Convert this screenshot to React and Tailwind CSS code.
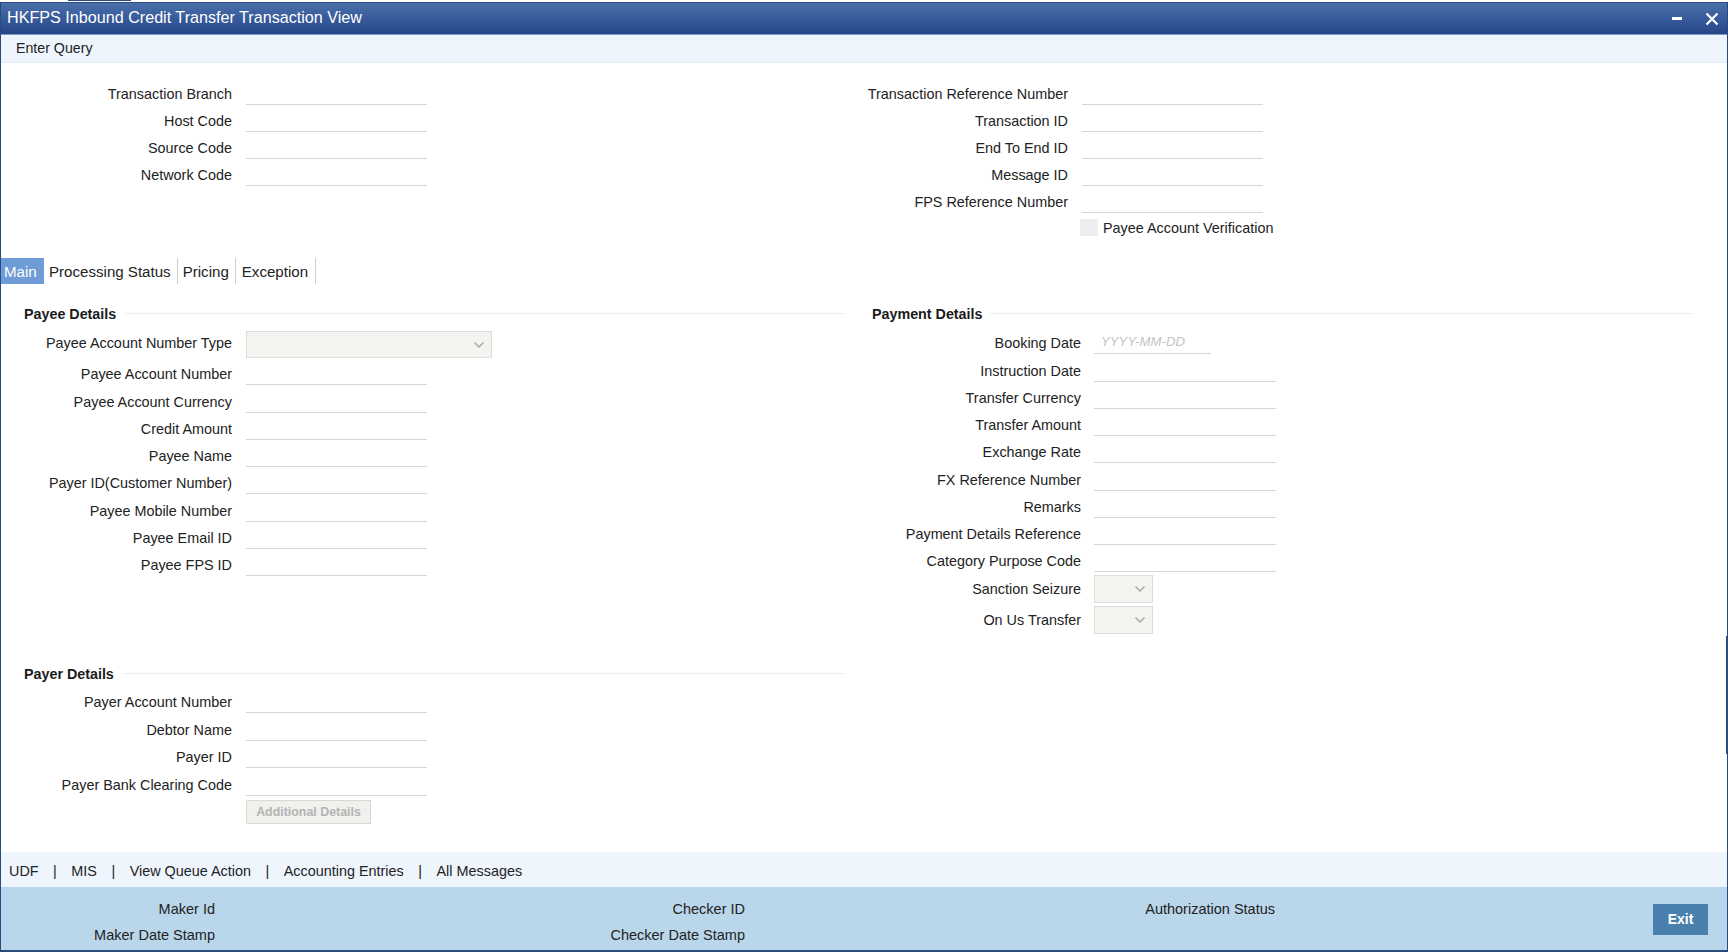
import { ChevronDown } from "lucide-react"

const headLeft = ["Transaction Branch", "Host Code", "Source Code", "Network Code"]
const headRight = ["Transaction Reference Number", "Transaction ID", "End To End ID", "Message ID", "FPS Reference Number"]
const payee = ["Payee Account Number", "Payee Account Currency", "Credit Amount", "Payee Name", "Payer ID(Customer Number)", "Payee Mobile Number", "Payee Email ID", "Payee FPS ID"]
const payment = ["Instruction Date", "Transfer Currency", "Transfer Amount", "Exchange Rate", "FX Reference Number", "Remarks", "Payment Details Reference", "Category Purpose Code"]
const payer = ["Payer Account Number", "Debtor Name", "Payer ID", "Payer Bank Clearing Code"]
const tabs = ["Processing Status", "Pricing", "Exception"]
const links = ["MIS", "View Queue Action", "Accounting Entries", "All Messages"]

function Row({ label, labelW, gap, h, inputW = "w-[181px]", placeholder }) {
  return (
    <div className={`flex items-end ${h} ${gap}`}>
      <label className={`${labelW} shrink-0 text-right leading-[17px] pb-[2px] whitespace-nowrap`}>{label}</label>
      <input
        disabled
        placeholder={placeholder}
        className={`${inputW} h-[24px] border-b border-[#d6d6d6] bg-white px-[7px] text-[13.2px] italic outline-none placeholder:text-[#c4c4c4]`}
      />
    </div>
  )
}

function SelectBox({ w, h }) {
  return (
    <div className={`${w} ${h} shrink-0 flex items-center justify-end pr-[4px] bg-[#f4f3f0] border border-[#dcdcdc]`}>
      <ChevronDown size={16} strokeWidth={2.5} className="text-[#ababab]" />
    </div>
  )
}

function SectionTitle({ title, className }) {
  return (
    <div className={`flex items-center gap-[8px] h-[20px] ${className}`}>
      <span className="font-bold text-[14.3px] leading-[20px] text-[#1a1a1a] whitespace-nowrap">{title}</span>
      <div className="flex-1 h-px bg-[#eeeeee] -mt-[2px]" />
    </div>
  )
}

export default function App() {
  return (
    <div className="w-[1728px] h-[952px] overflow-hidden bg-white text-[14.4px] text-[#222222] font-['Liberation_Sans',Arial,sans-serif]">
      <div className="h-[2px] pl-[68px]">
        <div className="w-[63px] h-px bg-[#2a4b80]" />
      </div>

      <div className="relative h-[950px] flex flex-col border-x border-t border-b-2 border-[#2a4b80]">
        <div className="absolute -right-px top-[633px] w-[2px] h-[118px] bg-[#2a4b80]" />

        {/* title bar */}
        <div className="h-[32px] shrink-0 flex items-center justify-between pl-[6px] pr-[8px] bg-gradient-to-b from-[#4a70aa] to-[#25468a] border-b border-[#7f9cc4]">
          <span className="text-white text-[16.15px] pb-[2px]">HKFPS Inbound Credit Transfer Transaction View</span>
          <div className="flex items-center gap-[23px]">
            <div className="w-[10px] h-[2.5px] bg-white" />
            <svg width="14" height="14" viewBox="0 0 14 14" className="text-white">
              <path d="M1.5 1.5 L12.5 12.5 M12.5 1.5 L1.5 12.5" stroke="currentColor" strokeWidth="2.2" />
            </svg>
          </div>
        </div>

        {/* toolbar */}
        <div className="h-[28px] shrink-0 flex items-center pl-[15px] bg-[#eef5fd] border-b border-[#e6eaee] text-[14.2px]">Enter Query</div>

        {/* header fields */}
        <div className="h-[195px] shrink-0 flex pt-[15px]">
          <div className="w-[844px] shrink-0">
            {headLeft.map((l) => (
              <Row key={l} label={l} labelW="w-[231px]" gap="gap-[14px]" h="h-[27px]" />
            ))}
          </div>
          <div>
            {headRight.map((l) => (
              <Row key={l} label={l} labelW="w-[223px]" gap="gap-[14px]" h="h-[27px]" />
            ))}
            <div className="flex items-center gap-[5px] mt-[6px] ml-[235px] h-[17px]">
              <div className="w-[18px] h-[17px] bg-[#eeeeee]" />
              <span className="pt-[2px]">Payee Account Verification</span>
            </div>
          </div>
        </div>

        {/* tabs */}
        <div className="h-[26px] shrink-0 flex text-[15.1px] leading-[28px]">
          <div className="w-[43px] pl-[3px] bg-[#6f9bd6] text-white">Main</div>
          {tabs.map((t) => (
            <div key={t} className="pl-[4px] pr-[6px] ml-[1px] border-r border-[#cfcfcf] whitespace-nowrap first:ml-0 last:pr-[7px] last:pl-[5px]">{t}</div>
          ))}
        </div>

        {/* main */}
        <div className="flex-1 flex pt-[20px]">
          <div className="w-[844px] shrink-0">
            <SectionTitle title="Payee Details" className="pl-[23px]" />
            <div className="flex items-center gap-[14px] mt-[7px] h-[27px]">
              <label className="w-[231px] text-right pb-[2px]">Payee Account Number Type</label>
              <SelectBox w="w-[246px]" h="h-[27px]" />
            </div>
            {payee.map((l) => (
              <Row key={l} label={l} labelW="w-[231px]" gap="gap-[14px]" h="h-[27.25px]" />
            ))}

            <SectionTitle title="Payer Details" className="pl-[23px] mt-[88px]" />
            <div className="mt-[1.5px]">
              {payer.map((l) => (
                <Row key={l} label={l} labelW="w-[231px]" gap="gap-[14px]" h="h-[27.5px]" />
              ))}
            </div>
            <button disabled className="block mt-[4.5px] ml-[245px] w-[125px] h-[24px] bg-[#f1f0ec] border border-[#d8d8d4] text-[12.4px] font-bold text-[#b4b4b4]">
              Additional Details
            </button>
          </div>

          <div className="flex-1 pr-[34px]">
            <SectionTitle title="Payment Details" className="pl-[27px]" />
            <div className="mt-[3px]">
              <Row label="Booking Date" labelW="w-[236px]" gap="gap-[13px]" h="h-[27.25px]" inputW="w-[117px]" placeholder="YYYY-MM-DD" />
              {payment.map((l) => (
                <Row key={l} label={l} labelW="w-[236px]" gap="gap-[13px]" h="h-[27.25px]" inputW="w-[182px]" />
              ))}
            </div>
            <div className="flex items-center gap-[13px] mt-[3px] h-[28px]">
              <label className="w-[236px] text-right pt-[2px]">Sanction Seizure</label>
              <SelectBox w="w-[59px]" h="h-[28px]" />
            </div>
            <div className="flex items-center gap-[13px] mt-[3px] h-[28px]">
              <label className="w-[236px] text-right pt-[2px]">On Us Transfer</label>
              <SelectBox w="w-[59px]" h="h-[28px]" />
            </div>
          </div>
        </div>

        {/* bottom links */}
        <div className="h-[35px] shrink-0 flex items-center gap-[14.5px] pl-[8px] pt-[4px] bg-[#eef5fd] text-[14.4px]">
          <span>UDF</span>
          {links.map((l) => (
            <span key={l} className="flex items-center gap-[14.5px]">
              <span>|</span>
              <span>{l}</span>
            </span>
          ))}
        </div>

        {/* audit bar */}
        <div className="h-[63px] shrink-0 flex bg-[#bad6eb] pt-[10px] leading-[25.5px] text-[14.5px]">
          <div className="w-[214px] shrink-0 text-right">
            <div>Maker Id</div>
            <div>Maker Date Stamp</div>
          </div>
          <div className="w-[530px] shrink-0 text-right">
            <div>Checker ID</div>
            <div>Checker Date Stamp</div>
          </div>
          <div className="w-[530px] shrink-0 text-right">
            <div>Authorization Status</div>
          </div>
          <div className="flex-1 flex justify-end pr-[19px]">
            <button className="w-[55px] h-[31px] mt-[7px] bg-[#4a80ae] text-white font-bold text-[14px]">Exit</button>
          </div>
        </div>
      </div>
    </div>
  )
}
